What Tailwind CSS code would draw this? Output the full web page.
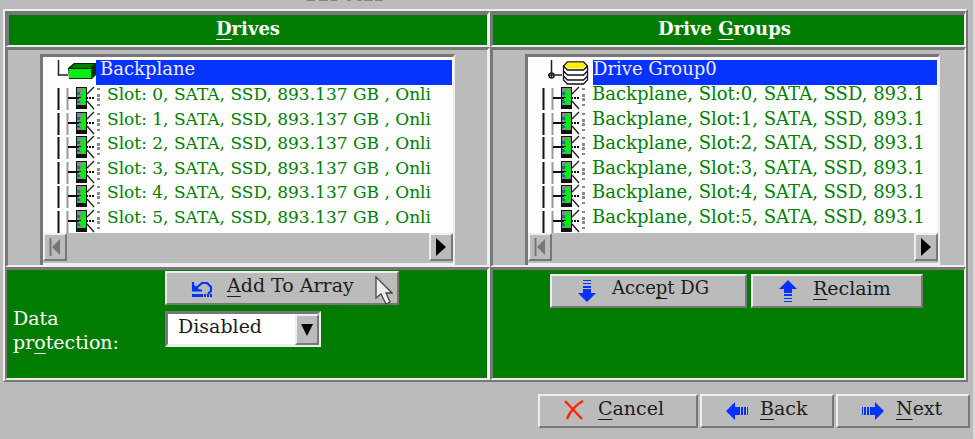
<!doctype html>
<html lang="en">
  <head>
    <meta charset="UTF-8" />
    <meta name="viewport" content="width=device-width, initial-scale=1.0" />
    <title>Drive selection</title>
    <script src="https://cdn.jsdelivr.net/npm/@tailwindcss/browser@4"></script>
  </head>
  <body class="min-h-screen bg-[#bbbbbb] border-r-2 border-[#d8d8d8] font-['DejaVu_Serif',serif] text-[19px] leading-6 text-[#1c1c1c] [text-decoration-skip-ink:none]">

    <!-- shared icons -->
    <svg class="hidden">
      <symbol id="disk" viewBox="0 0 60 24">
        <path d="M15.5 2v22" stroke="#111" stroke-width="2" />
        <path d="M24.5 2v22" stroke="#999" stroke-width="2" />
        <path d="M25 12h9" stroke="#111" stroke-width="2" />
        <path d="M33 1h11v22H33z" fill="#111" />
        <path d="M34 2h9v17h-9z" fill="#888" />
        <path d="M34 6h3v3h-3zM34 14h3v3h-3z" fill="#067a8a" />
        <path d="M32 11h6v2h-6z" fill="#111" />
        <path d="M38 3h4v5h1v7h-1v4h-4v-4h-2v-3h2z" fill="#00ee10" />
        <path d="M44 8l7-7M44 15l7 8" stroke="#222" stroke-width="1.4" />
        <path d="M43 11h2v2h-2zM46 11h2v2h-2zM49 11h2v2h-2z" fill="#111" />
        <path d="M54 2h3v2h-3zM54 8h3v3h-3zM54 12h3v3h-3zM54 18h3v2h-3z" fill="#8a8a8a" />
      </symbol>
    </svg>

    <main class="pl-[3px] pr-[5px]">
      <!-- lower edge of the heading scrolled off above -->
      <svg class="ml-[304px] block h-[9px] w-20" viewBox="0 0 80 9"><path d="M0 .5h8M12 .5h9M24 .5h6M40 .5h4M50 .5h5M57 .5h9M68 .5h8" stroke="#858585" /></svg>

      <section class="grid grid-cols-[485fr_476fr] border-2 border-t-[#eeeeee] border-l-[#eeeeee] border-r-[#777777] border-b-[#777777]">

        <!-- drives -->
        <div class="flex flex-col">
          <h2 class="border-l-4 border-t-4 border-r-3 border-b-2 border-t-[#777777] border-l-[#777777] border-r-[#eeeeee] border-b-[#eeeeee] bg-[#007d00] h-9 text-center text-lg leading-7 font-bold text-white"><u class="underline-offset-4">D</u>rives</h2>
          <div class="border-l-3 border-t-3 border-r-3 border-b-2 border-t-[#777777] border-l-[#777777] border-r-[#eeeeee] border-b-[#eeeeee] pt-1 pl-8 pr-8">
            <div class="border-l-3 border-t-3 border-r-2 border-t-[#777777] border-l-[#777777] border-r-[#eeeeee]">
              <ul class="h-[176px] overflow-hidden bg-[#fdfdfd] pt-[3px] text-[17px] leading-4 whitespace-nowrap text-[#008000]">
                <li class="flex h-[26px] pr-px">
                  <svg class="h-6 w-[53px] shrink-0" viewBox="0 0 53 24">
                    <path d="M15.5 0v15H25" fill="none" stroke="#222" stroke-width="1.5" />
                    <path d="M25 8l6-5h22v12l-4 4H26z" fill="#053005" />
                    <path d="M32 4h19l-4 4H28z" fill="#008000" />
                    <path d="M26 9h22v9H26z" fill="#00ee10" />
                    <path d="M28 8.500h4M34 8.500h4M41 8.500h4" stroke="#111" />
                  </svg>
                  <span class="mb-px flex-1 bg-[#0433ff] pl-1 text-lg leading-[18px] text-[#f4e9ff]">Backplane</span>
                </li>
                <li class="flex h-6 even:h-[25px]"><svg class="h-6 w-[60px] shrink-0"><use href="#disk" /></svg><span class="pl-1">Slot: 0, SATA, SSD, 893.137 GB , Onli</span></li>
                <li class="flex h-6 even:h-[25px]"><svg class="h-6 w-[60px] shrink-0"><use href="#disk" /></svg><span class="pl-1">Slot: 1, SATA, SSD, 893.137 GB , Onli</span></li>
                <li class="flex h-6 even:h-[25px]"><svg class="h-6 w-[60px] shrink-0"><use href="#disk" /></svg><span class="pl-1">Slot: 2, SATA, SSD, 893.137 GB , Onli</span></li>
                <li class="flex h-6 even:h-[25px]"><svg class="h-6 w-[60px] shrink-0"><use href="#disk" /></svg><span class="pl-1">Slot: 3, SATA, SSD, 893.137 GB , Onli</span></li>
                <li class="flex h-6 even:h-[25px]"><svg class="h-6 w-[60px] shrink-0"><use href="#disk" /></svg><span class="pl-1">Slot: 4, SATA, SSD, 893.137 GB , Onli</span></li>
                <li class="flex h-6 even:h-[25px]"><svg class="h-6 w-[60px] shrink-0"><use href="#disk" /></svg><span class="pl-1">Slot: 5, SATA, SSD, 893.137 GB , Onli</span></li>
              </ul>
              <div class="flex justify-between border-b-2 border-[#eeeeee] pb-0.5">
                <button aria-label="Scroll left" class="flex h-7 w-6 items-center justify-center border-2 border-t-[#eeeeee] border-l-[#eeeeee] border-r-[#777777] border-b-[#777777]">
                  <svg class="h-5 w-3" viewBox="0 0 12 20"><path d="M1.5 1v18" stroke="#777" stroke-width="2" /><path d="M11 2v16L3 10z" fill="#777" /></svg>
                </button>
                <button aria-label="Scroll right" class="flex h-7 w-6 items-center justify-center border-2 border-t-[#eeeeee] border-l-[#eeeeee] border-r-[#777777] border-b-[#777777]">
                  <svg class="h-5 w-3" viewBox="0 0 12 20"><path d="M1 1l10 9-10 9z" fill="#000" /></svg>
                </button>
              </div>
            </div>
          </div>
          <div class="flex-1 border-l-2 border-t-3 border-r-3 border-b-2 border-t-[#777777] border-l-[#777777] border-r-[#eeeeee] border-b-[#eeeeee] bg-[#007d00] pl-1.5 pt-px pb-6">
            <div class="relative ml-[152px] w-[234px]">
              <button class="flex h-[34px] w-full border-2 border-t-[#eeeeee] border-l-[#eeeeee] border-r-[#777777] border-b-[#777777] bg-[#bbbbbb] pl-6">
                <svg class="mt-[7px] h-5 w-[22px]" viewBox="0 0 22 20">
                  <path d="M2 2v9M1 10.500h10M3 10l8-7h5l4 4v4l-3 3" fill="none" stroke="#0433ff" stroke-width="2.200" />
                  <path d="M1 3l9 8H1z" fill="#0433ff" />
                  <path d="M1 14h11v3H1zM13 14h2v3h-2zM16 14h2v3h-2zM19 14h2v3h-2z" fill="#0433ff" />
                </svg>
                <span class="pl-3.5"><u class="underline-offset-4">A</u>dd To Array</span>
              </button>
              <!-- mouse pointer -->
              <svg class="absolute right-1.5 top-1 h-8 w-[18px]" viewBox="0 0 18 32"><path d="M1 2v21l5-4 5 10 4-2-4-9h6z" fill="#eee" stroke="#444" stroke-width="1.3" /></svg>
            </div>
            <div class="mt-1.5 flex">
              <label for="protection" class="mt-[-5px] w-[152px] text-white">Data<br />pr<u class="underline-offset-4">o</u>tection:</label>
              <div class="relative">
                <select id="protection" class="h-9 w-[156px] appearance-none rounded-none border-3 border-t-[#777777] border-l-[#777777] border-r-[#eeeeee] border-b-[#eeeeee] bg-white pb-1.5 pl-2.5 leading-6">
                  <option>Disabled</option>
                </select>
                <span class="pointer-events-none absolute right-0.5 top-[3px] flex h-[31px] w-6 items-center justify-center border-2 border-t-[#eeeeee] border-l-[#eeeeee] border-r-[#777777] border-b-[#777777] bg-[#bbbbbb]">
                  <svg class="h-3 w-3" viewBox="0 0 12 12"><path d="M0 0h12L6 12z" fill="#000" /></svg>
                </span>
              </div>
            </div>
          </div>
        </div>

        <!-- drive groups -->
        <div class="flex flex-col">
          <h2 class="border-l-3 border-t-4 border-r-2 border-b-2 border-t-[#777777] border-l-[#777777] border-r-[#eeeeee] border-b-[#eeeeee] bg-[#007d00] h-9 pr-2 text-center text-lg leading-7 font-bold text-white">Drive <u class="underline-offset-4">G</u>roups</h2>
          <div class="border-l-3 border-t-3 border-r-2 border-b-2 border-t-[#777777] border-l-[#777777] border-r-[#eeeeee] border-b-[#eeeeee] pt-1 pl-8 pr-6">
            <div class="border-l-3 border-t-3 border-r-2 border-t-[#777777] border-l-[#777777] border-r-[#eeeeee]">
              <ul class="h-[176px] overflow-hidden bg-[#fdfdfd] pt-[3px] text-lg leading-4 whitespace-nowrap text-[#008000]">
                <li class="flex h-[26px] pr-px">
                  <svg class="h-[26px] w-[65px] shrink-0" viewBox="0 0 65 26">
                    <path d="M23.500 0v18M20 15h14" stroke="#222" stroke-width="1.5" />
                    <circle cx="23.500" cy="15.500" r="2.500" fill="none" stroke="#222" stroke-width="1.500" />
                    <path d="M35.500 6v14l4 4h16l4-4V6l-4-4h-16z" fill="#fff" stroke="#111" stroke-width="1.300" />
                    <path d="M35.500 6l4 4h16l4-4M35.500 11l4 4h16l4-4M35.500 16l4 4h16l4-4" fill="none" stroke="#111" stroke-width="1.300" />
                    <path d="M40 2.500h15l3 3-3 3H40l-3-3z" fill="#ffee00" />
                  </svg>
                  <span class="mb-px flex-1 bg-[#0433ff] leading-[18px] text-[#f4e9ff]">Drive Group0</span>
                </li>
                <li class="flex h-6 even:h-[25px]"><svg class="h-6 w-[60px] shrink-0"><use href="#disk" /></svg><span class="pl-1">Backplane, Slot:0, SATA, SSD, 893.1</span></li>
                <li class="flex h-6 even:h-[25px]"><svg class="h-6 w-[60px] shrink-0"><use href="#disk" /></svg><span class="pl-1">Backplane, Slot:1, SATA, SSD, 893.1</span></li>
                <li class="flex h-6 even:h-[25px]"><svg class="h-6 w-[60px] shrink-0"><use href="#disk" /></svg><span class="pl-1">Backplane, Slot:2, SATA, SSD, 893.1</span></li>
                <li class="flex h-6 even:h-[25px]"><svg class="h-6 w-[60px] shrink-0"><use href="#disk" /></svg><span class="pl-1">Backplane, Slot:3, SATA, SSD, 893.1</span></li>
                <li class="flex h-6 even:h-[25px]"><svg class="h-6 w-[60px] shrink-0"><use href="#disk" /></svg><span class="pl-1">Backplane, Slot:4, SATA, SSD, 893.1</span></li>
                <li class="flex h-6 even:h-[25px]"><svg class="h-6 w-[60px] shrink-0"><use href="#disk" /></svg><span class="pl-1">Backplane, Slot:5, SATA, SSD, 893.1</span></li>
              </ul>
              <div class="flex justify-between border-b-2 border-[#eeeeee] pb-0.5">
                <button aria-label="Scroll left" class="flex h-7 w-6 items-center justify-center border-2 border-t-[#eeeeee] border-l-[#eeeeee] border-r-[#777777] border-b-[#777777]">
                  <svg class="h-5 w-3" viewBox="0 0 12 20"><path d="M1.5 1v18" stroke="#777" stroke-width="2" /><path d="M11 2v16L3 10z" fill="#777" /></svg>
                </button>
                <button aria-label="Scroll right" class="flex h-7 w-6 items-center justify-center border-2 border-t-[#eeeeee] border-l-[#eeeeee] border-r-[#777777] border-b-[#777777]">
                  <svg class="h-5 w-3" viewBox="0 0 12 20"><path d="M1 1l10 9-10 9z" fill="#000" /></svg>
                </button>
              </div>
            </div>
          </div>
          <div class="flex flex-1 gap-1 border-l-3 border-t-3 border-r-2 border-b-2 border-t-[#777777] border-l-[#777777] border-r-[#eeeeee] border-b-[#eeeeee] bg-[#007d00] pl-[57px] pt-1">
            <button class="flex h-[34px] w-[197px] border-2 border-t-[#eeeeee] border-l-[#eeeeee] border-r-[#777777] border-b-[#777777] bg-[#bbbbbb] pl-[26px]">
              <svg class="mt-1 h-[22px] w-[18px]" viewBox="0 0 18 22"><path d="M5 0h8v1H5zM5 3h8v1H5zM5 6h8v2H5zM5 9h8v4h5l-9 9-9-9h5z" fill="#0433ff" /></svg>
              <span class="pl-4 text-lg leading-6">Acce<u class="underline-offset-4">p</u>t DG</span>
            </button>
            <button class="flex h-[34px] w-[172px] border-2 border-t-[#eeeeee] border-l-[#eeeeee] border-r-[#777777] border-b-[#777777] bg-[#bbbbbb] pl-[26px]">
              <svg class="mt-1 h-[22px] w-[18px]" viewBox="0 0 18 22"><path d="M5 22h8v-1H5zM5 19h8v-1H5zM5 16h8v-2H5zM5 13h8V9h5L9 0 0 9h5z" fill="#0433ff" /></svg>
              <span class="pl-4"><u class="underline-offset-4">R</u>eclaim</span>
            </button>
          </div>
        </div>
      </section>

      <div class="-mr-0.5 mt-3 flex justify-end gap-0.5">
        <button class="flex h-[34px] w-40 border-2 border-t-[#eeeeee] border-l-[#eeeeee] border-r-[#777777] border-b-[#777777] pl-6">
          <svg class="mt-1 h-5 w-5" viewBox="0 0 20 20"><path d="M1 1l17 18M19 1C13 4 6 11 3 19" fill="none" stroke="#ff2600" stroke-width="2.400" /></svg>
          <span class="pl-3.5"><u class="underline-offset-4">C</u>ancel</span>
        </button>
        <button class="flex h-[34px] w-[134px] border-2 border-t-[#eeeeee] border-l-[#eeeeee] border-r-[#777777] border-b-[#777777] pl-6">
          <svg class="mt-1.5 h-[18px] w-[22px]" viewBox="0 0 22 18"><path d="M22 5v8h-1V5zM20 5v8h-2V5zM17 5v8h-2V5zM14 5v8H9v5L0 9l9-9v5z" fill="#0433ff" /></svg>
          <span class="pl-3"><u class="underline-offset-4">B</u>ack</span>
        </button>
        <button class="flex h-[34px] w-[134px] border-2 border-t-[#eeeeee] border-l-[#eeeeee] border-r-[#777777] border-b-[#777777] pl-6">
          <svg class="mt-1.5 h-[18px] w-[22px]" viewBox="0 0 22 18"><path d="M0 5v8h1V5zM2 5v8h2V5zM5 5v8h2V5zM8 5v8h5v5l9-9-9-9v5z" fill="#0433ff" /></svg>
          <span class="pl-3"><u class="underline-offset-4">N</u>ext</span>
        </button>
      </div>
    </main>
  </body>
</html>
